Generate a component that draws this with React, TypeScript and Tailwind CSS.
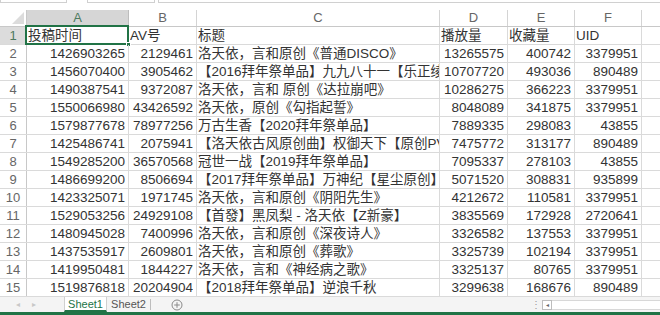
const cols = [102, 68, 243, 68, 67, 67];
const letters = ["A", "B", "C", "D", "E", "F"];

type RowData = [string, string, string, string, string, string];

const rows: RowData[] = [
  ["1426903265", "2129461", "洛天依，言和原创《普通DISCO》", "13265575", "400742", "3379951"],
  ["1456070400", "3905462", "【2016拜年祭单品】九九八十一【乐正绫】", "10707720", "493036", "890489"],
  ["1490387541", "9372087", "洛天依，言和 原创《达拉崩吧》", "10286275", "366223", "3379951"],
  ["1550066980", "43426592", "洛天依，原创《勾指起誓》", "8048089", "341875", "3379951"],
  ["1579877678", "78977256", "万古生香【2020拜年祭单品】", "7889335", "298083", "43855"],
  ["1425486741", "2075941", "【洛天依古风原创曲】权御天下【原创PV付】", "7475772", "313177", "890489"],
  ["1549285200", "36570568", "冠世一战【2019拜年祭单品】", "7095337", "278103", "43855"],
  ["1486699200", "8506694", "【2017拜年祭单品】万神纪【星尘原创】", "5071520", "308831", "935899"],
  ["1423325071", "1971745", "洛天依，言和原创《阴阳先生》", "4212672", "110581", "3379951"],
  ["1529053256", "24929108", "【首發】黑凤梨 - 洛天依【Z新豪】", "3835569", "172928", "2720641"],
  ["1480945028", "7400996", "洛天依，言和原创《深夜诗人》", "3326582", "137553", "3379951"],
  ["1437535917", "2609801", "洛天依，言和原创《葬歌》", "3325739", "102194", "3379951"],
  ["1419950481", "1844227", "洛天依，言和《神经病之歌》", "3325137", "80765", "3379951"],
  ["1519876818", "20204904", "【2018拜年祭单品】逆浪千秋", "3299638", "168676", "890489"],
];

const font = { fontFamily: '"Liberation Sans", "Noto Sans CJK SC", sans-serif' };

const ColumnHeader = () => (
  <div className="flex h-[17px] border-b border-[#c8c8c8] text-[13px] leading-[16px] text-[#666]">
    {/* corner */}
    <div className="relative w-[27px] shrink-0 border-r border-[#c8c8c8]">
      <svg className="absolute right-[2px] bottom-[2px]" width="12" height="12" viewBox="0 0 12 12">
        <polygon points="12,0 12,12 0,12" fill="#dcdcdc" />
      </svg>
    </div>
    {cols.map((w, i) => (
      <div
        key={letters[i]}
        style={{ width: w }}
        className={
          i === 0
            ? "shrink-0 border-r border-[#bdbdbd] bg-[#d6d6d6] text-center text-[#4e7a60]"
            : "shrink-0 border-r border-[#d4d4d4] text-center"
        }
      >
        {letters[i]}
      </div>
    ))}
    <div className="flex-1" />
  </div>
);

const GridRow = ({ n, cells, header }: { n: number; cells: string[]; header?: boolean }) => (
  <div className="flex h-[18px] border-b border-[#dadada] text-[13.5px] leading-[17px] text-[#333]">
    <div
      className={
        header
          ? "w-[27px] shrink-0 border-r border-[#bdbdbd] bg-[#dcdcdc] text-center text-[13px] text-[#4e7a60]"
          : "w-[27px] shrink-0 border-r border-[#c8c8c8] text-center text-[13px] text-[#666]"
      }
    >
      {n}
    </div>
    {cells.map((c, i) => {
      const text = header || i === 2;
      const selected = header && i === 0;
      return (
        <div
          key={i}
          style={{ width: cols[i] }}
          className={
            "relative shrink-0 border-r border-[#dadada] " +
            (selected ? "overflow-visible " : "overflow-hidden ") +
            (text ? "pl-[1px] text-left" : "pr-[3px] text-right")
          }
        >
          <div className="overflow-hidden whitespace-nowrap">{c}</div>
          {selected && (
            <div className="absolute -top-[2px] -left-[2px] h-[20px] w-[104px] border-2 border-[#217346]">
              <div className="absolute -right-[4px] -bottom-[4px] h-[5px] w-[5px] border border-white bg-[#217346]" />
            </div>
          )}
        </div>
      );
    })}
    <div className="flex-1" />
  </div>
);

const TabBar = () => (
  <div className="flex h-[15px] items-stretch bg-[#f4f4f4] text-[11px] leading-[14px]">
    <div className="flex w-[64px] items-center gap-[12px] pl-[16px] text-[8px] text-[#c8c8c8]">
      <span>◂</span>
      <span>▸</span>
    </div>
    <div className="w-[43px] border-x border-[#d0d0d0] border-b-2 border-b-[#217346] bg-white text-center text-[#217346]">
      Sheet1
    </div>
    <div className="w-[43px] text-center text-[#555]">Sheet2</div>
    <div className="my-[2px] w-px bg-[#bdbdbd]" />
    <div className="flex w-[52px] items-center justify-center">
      <svg width="12" height="12" viewBox="0 0 12 12">
        <circle cx="6" cy="6" r="5" fill="none" stroke="#8a8a8a" strokeWidth="1" />
        <path d="M6 3.2v5.6M3.2 6h5.6" stroke="#8a8a8a" strokeWidth="1" />
      </svg>
    </div>
    <div className="flex-1" />
    <div className="flex w-[12px] items-center justify-center text-[10px] text-[#9a9a9a]">⋮</div>
    <div className="flex w-[118px] items-center">
      <div className="flex h-[10px] w-[10px] items-center justify-center border border-[#bdbdbd] bg-white text-[6px] text-[#666]">
        ◂
      </div>
      <div className="h-[10px] flex-1 border-y border-[#d8d8d8] bg-white" />
    </div>
  </div>
);

export default function App() {
  return (
    <div className="h-[315px] w-[660px] overflow-hidden bg-white" style={font}>
      {/* remains of name box / formula bar */}
      <div className="flex h-[10px] items-start gap-[20px]">
        <div className="h-[3px] w-[67px] border-x border-b border-[#d0d0d0]" />
        <div className="h-[3px] w-[68px] border-x border-b border-[#d0d0d0]" />
        <div className="-ml-[17px] h-[3px] flex-1 border-l border-b border-[#d0d0d0]" />
      </div>
      <ColumnHeader />
      <GridRow n={1} header cells={["投稿时间", "AV号", "标题", "播放量", "收藏量", "UID"]} />
      {rows.map((r, i) => (
        <GridRow key={i} n={i + 2} cells={r} />
      ))}
      <TabBar />
      <div className="h-[3px] bg-[#217346]" />
    </div>
  );
}
